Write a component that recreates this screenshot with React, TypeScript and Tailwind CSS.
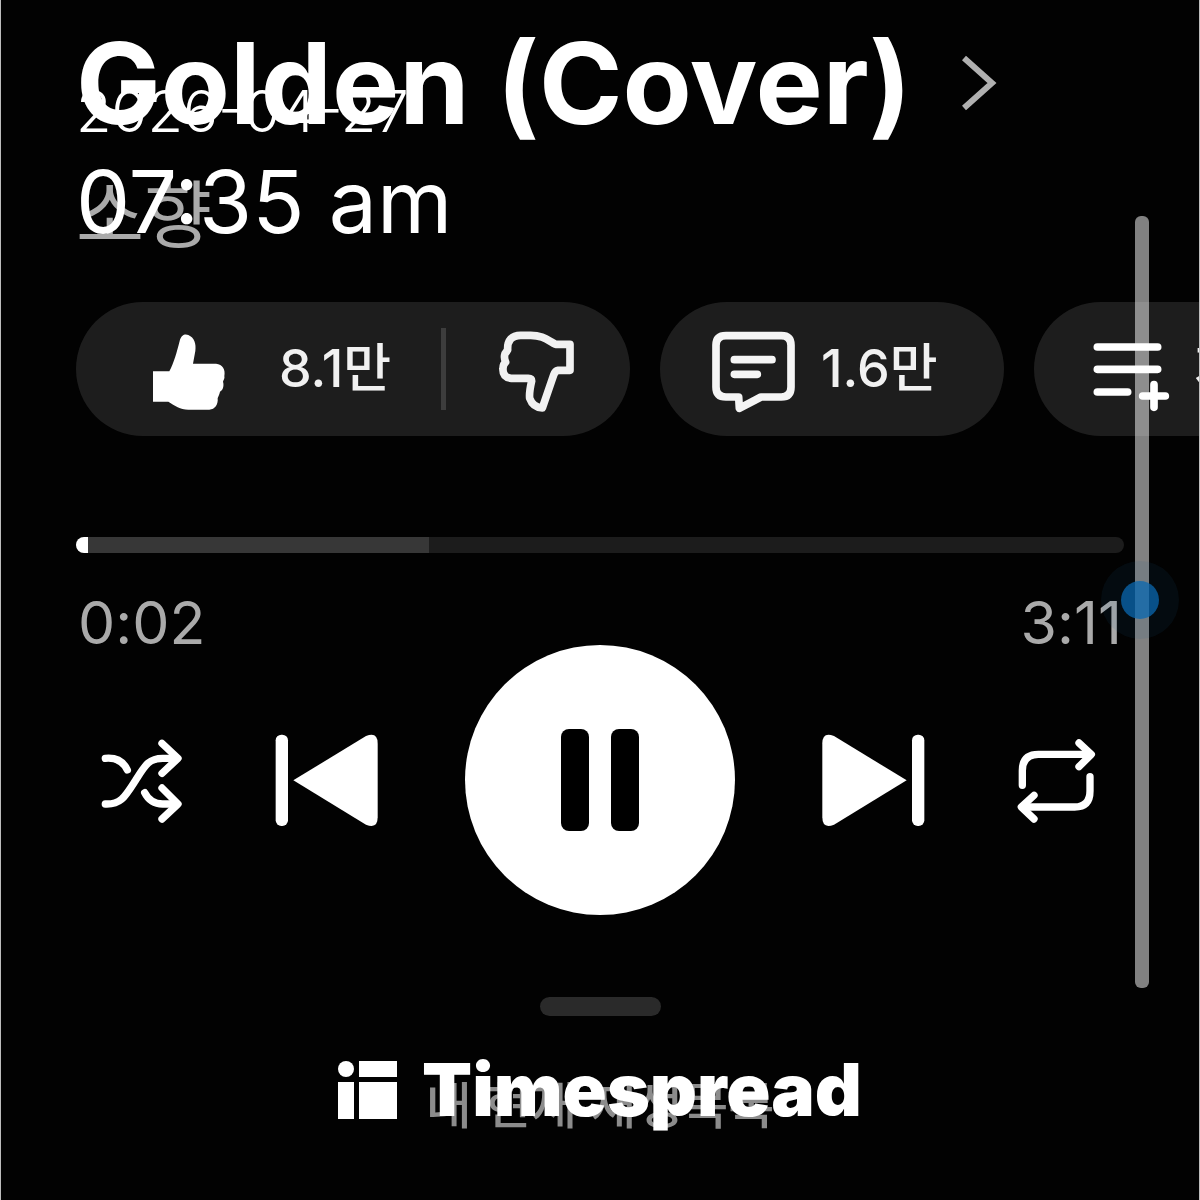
function ThumbUp() {
  return (
    <svg viewBox="273 123 228 237" className="w-[76px] h-[79px] shrink-0" fill="white" aria-hidden="true">
      <path d="M279 241H328C341 217 351 182 359 150C364 131 375 128 385 132C403 140 409 158 406 180L399 218H468C488 220 497 235 493 255C495 262 490 268 489 272C493 285 488 298 480 302C478 312 474 318 473 322C475 340 465 356 448 356H385C360 355 345 345 325 332H279Z" />
    </svg>
  );
}

function ThumbDown() {
  return (
    <svg viewBox="114 114 234 252" className="w-[78px] h-[84px] shrink-0" fill="none" stroke="#f1f1f1" strokeWidth="23" strokeLinejoin="round" aria-hidden="true">
      <path d="M333 160V238H298Q288 240 284 252L250 351Q222 350 212 322Q210 305 218 270Q218 262 208 262H155Q130 258 132 232Q132 220 140 213Q134 200 138 188Q143 182 146 176Q144 134 185 133H215C250 133 265 147 290 160Z" />
    </svg>
  );
}

function CommentIcon() {
  return (
    <svg viewBox="753 114 255 252" className="w-[85px] h-[84px] shrink-0" fill="none" stroke="#f5f5f5" strokeWidth="23" strokeLinecap="round" strokeLinejoin="round" aria-hidden="true">
      <path d="M798 134H964Q993 134 993 163V288Q993 318 964 318H903L838 352L836 318H798Q768 318 768 288V163Q768 134 798 134Z" />
      <path d="M823 206H936M823 250H892" />
    </svg>
  );
}

function PlaylistAdd() {
  return (
    <svg viewBox="696 426 234 210" className="w-[78px] h-[70px] shrink-0" fill="none" stroke="white" strokeWidth="23" strokeLinecap="round" aria-hidden="true">
      <path d="M712 441H893M712 508H893M712 576H803" />
      <path d="M882 554V622M848 588H916" />
    </svg>
  );
}

function Shuffle() {
  return (
    <svg viewBox="60 105 255 270" className="w-[85px] h-[90px]" fill="none" stroke="white" strokeWidth="22" strokeLinecap="round" strokeLinejoin="round" aria-hidden="true">
      <path d="M76 175C108 172 130 184 142 210" />
      <path d="M76 312C122 314 134 292 166 242C196 195 206 175 248 175H290" />
      <path d="M194 278C205 300 222 312 248 312H290" />
      <path d="M246 130L294 175L246 220M246 264L294 312L246 357" />
    </svg>
  );
}

function Repeat() {
  return (
    <svg viewBox="645 105 255 270" className="w-[85px] h-[90px]" fill="none" stroke="white" strokeWidth="22" strokeLinecap="round" strokeLinejoin="round" aria-hidden="true">
      <path d="M667 256V212Q667 163 715 163H870" />
      <path d="M837 129L874 163L837 200" />
      <path d="M870 230V273Q870 321 824 321H667" />
      <path d="M702 286L664 321L702 357" />
    </svg>
  );
}

function Previous() {
  return (
    <svg viewBox="573 102 324 276" className="w-[108px] h-[92px]" fill="white" aria-hidden="true">
      <rect x="587" y="104" width="37" height="274" rx="17" />
      <path d="M640 241L858 108Q893 94 893 130V352Q893 388 858 374Z" />
    </svg>
  );
}

function Next() {
  return (
    <svg viewBox="63 102 324 276" className="w-[108px] h-[92px]" fill="white" aria-hidden="true">
      <rect x="336" y="104" width="37" height="274" rx="17" />
      <path d="M320 241L102 108Q67 94 67 130V352Q67 388 102 374Z" />
    </svg>
  );
}

function TimespreadMark() {
  return (
    <svg viewBox="0 0 60 58" className="w-[60px] h-[58px] shrink-0" fill="white" aria-hidden="true">
      <circle cx="8" cy="8" r="8" />
      <rect x="21" y="0" width="38" height="16" />
      <rect x="0" y="21" width="16" height="37" />
      <rect x="21" y="21" width="38" height="37" />
    </svg>
  );
}

const chip = "flex items-center h-[134px] shrink-0 rounded-full bg-[#1d1d1d]";
const count = "pb-1 text-[52px] leading-[52px] font-medium text-[#f1f1f1] whitespace-nowrap";

export default function App() {
  return (
    <main className="relative min-h-screen overflow-hidden bg-[#020202] border-x border-[#bdbdbd] text-white font-['Inter','Noto_Sans_CJK_KR',sans-serif]">
      <section className="pt-[27px]">
        <div className="px-[75px]">
          <a href="#song" className="flex items-center gap-[50px]">
            <h1 className="text-[113px] leading-[112px] font-bold whitespace-nowrap [font-feature-settings:'calt'_0]">Golden (Cover)</h1>
            <svg viewBox="0 0 36 60" className="w-[36px] h-[60px]" fill="none" stroke="#b0b0b0" strokeWidth="6" aria-hidden="true">
              <path d="M3 5L31 30L3 55" />
            </svg>
          </a>
          <p className="mt-[40px] text-[74px] leading-[72px] text-[#aaaaaa]">소향</p>
        </div>

        <div className="mt-[51px] pl-[75px] flex gap-[30px] overflow-hidden">
          <div className={chip}>
            <button type="button" aria-label="Like" className="flex items-center w-[365px] pt-1 pl-[75px] gap-[52px]">
              <ThumbUp />
              <span className={count}>8.1만</span>
            </button>
            <span className="w-[5px] h-[82px] bg-[#3d3d3d]" />
            <button type="button" aria-label="Dislike" className="flex justify-center w-[184px] pt-1 pr-1">
              <ThumbDown />
            </button>
          </div>
          <button type="button" aria-label="Comments" className={`${chip} w-[344px] pt-1 pl-[51px] gap-[25px]`}>
            <CommentIcon />
            <span className={count}>1.6만</span>
          </button>
          <button type="button" aria-label="Save" className={`${chip} w-[344px] pt-4 pl-[58px] gap-[24px]`}>
            <PlaylistAdd />
            <span className="pb-4 text-[52px] leading-[52px] font-medium text-[#f1f1f1] whitespace-nowrap">저장</span>
          </button>
        </div>

        <div className="mt-[101px] px-[75px]">
          <div className="relative h-4 rounded-full bg-[#1c1c1c] overflow-hidden flex">
            <span className="w-3 bg-white" />
            <span className="w-[341px] bg-[#373737]" />
            <input type="range" aria-label="Playback position" min={0} max={191} defaultValue={2} className="absolute inset-0 w-full h-full opacity-0 cursor-pointer" />
          </div>
          <div className="mt-[50px] pb-[2px] px-[2px] flex justify-between text-[59px] leading-[40px] text-[#aaaaaa] [font-feature-settings:'calt'_0]">
            <span>0:02</span>
            <span>3:11</span>
          </div>
        </div>

        <div className="px-[99px] flex items-center justify-between">
          <button type="button" aria-label="Shuffle"><Shuffle /></button>
          <button type="button" aria-label="Previous"><Previous /></button>
          <button type="button" aria-label="Pause" className="size-[270px] rounded-full bg-white flex items-center justify-center gap-[22px]">
            <span className="w-[28px] h-[102px] rounded-lg bg-black" />
            <span className="w-[28px] h-[102px] rounded-lg bg-black" />
          </button>
          <button type="button" aria-label="Next"><Next /></button>
          <button type="button" aria-label="Repeat"><Repeat /></button>
        </div>

        <div className="mt-[82px] mx-auto w-[121px] h-[19px] rounded-full bg-[#2a2a2a]" />
        <p className="mt-[62px] text-center text-[50px] leading-[56px] font-medium text-[#8c8c8c] whitespace-nowrap">내 현재 재생목록</p>
      </section>

      {/* clock, brand and scrubber float over the player */}
      <div className="absolute left-[75px] top-[82px] pointer-events-none">
        <p className="text-[58px] leading-[58px] font-light">2026-04-27</p>
        <p className="mt-[18px] text-[86px] leading-[88px]">07:35 am</p>
      </div>

      <div className="absolute inset-x-0 top-[1050px] flex items-center justify-center gap-[24px] pointer-events-none">
        <TimespreadMark />
        <span className="text-[73px] leading-[80px] font-black">Timespread</span>
      </div>

      <div className="absolute right-[50px] top-[216px] h-[772px] w-[14px] rounded-md bg-white/50" />
      <div className="absolute right-[20px] top-[561px] size-[78px] rounded-full bg-[#1a5f96]/10 flex items-center justify-center">
        <span className="size-[38px] rounded-full bg-[#0a68b0]/75" />
      </div>
    </main>
  );
}
